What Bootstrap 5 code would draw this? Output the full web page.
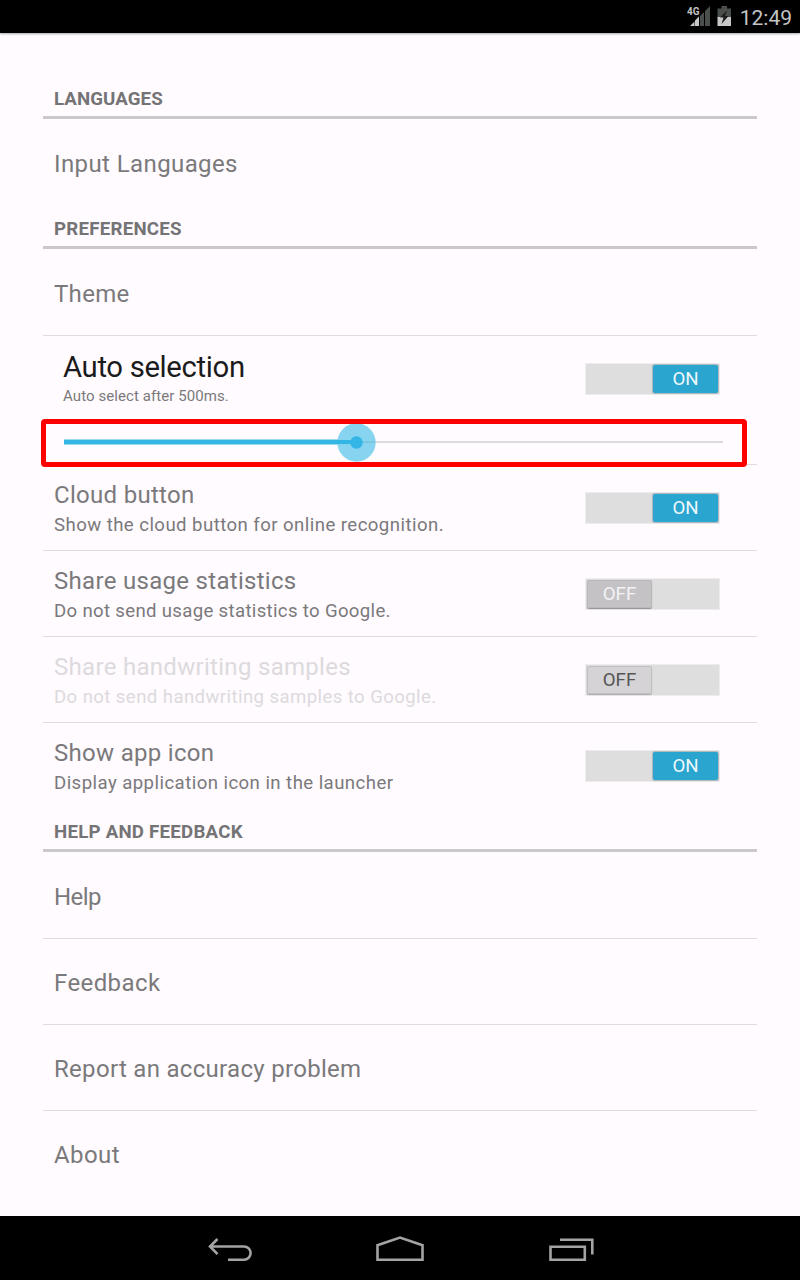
<!DOCTYPE html>
<html lang="en">
<head>
<meta charset="utf-8">
<meta name="viewport" content="width=device-width, initial-scale=1">
<title>Settings</title>
<link href="https://cdn.jsdelivr.net/npm/bootstrap@5.3.0/dist/css/bootstrap.min.css" rel="stylesheet">
<script src="https://cdn.jsdelivr.net/npm/bootstrap@5.3.0/dist/js/bootstrap.bundle.min.js" defer></script>
<style>
body{font-family:Roboto,"Noto Sans",sans-serif;background:#fffbff;color:#7a797b;width:800px;height:1280px;overflow:hidden}
.status{height:33px;color:#c4c4c4;font-size:21px;line-height:33px;padding-right:8px;box-shadow:0 1px 2px #aaa}
.clock{padding-top:3px;margin-left:7px}
.prefs{height:1183px;padding:42px 43px 0}
.head{height:44px;border-bottom:3px solid #cac8cb;padding:4px 11px 0;font-size:18.7px;font-weight:700;line-height:41px;letter-spacing:.23px;color:#747375}
.head.tight{letter-spacing:.08px}
.item{height:86px;border-bottom:1px solid #dedcdf;padding:4px 37px 0 11px}
.item.first{height:87px;padding-top:5px}
.item.final{height:85px;border:0}
.item.first.final{height:86px}
.ttl{font-size:24px;line-height:30px;letter-spacing:.3px}
.item>.ttl{margin-top:-2px}
.ttl.wide{letter-spacing:.4px}
.ttl.tight{letter-spacing:-.6px}
.sum{font-size:18.6px;line-height:30px;letter-spacing:.41px}
.sum.wide{letter-spacing:.44px}
.sum.tight{letter-spacing:.33px}
.faded{color:#dcdadd}
.auto{height:129px;border-bottom:1px solid #dedcdf;padding:14px 0 0 20px}
.auto-row{padding-right:37px}
.big{font-size:29.3px;line-height:34px;letter-spacing:-.35px;color:#1b1b1c}
.tiny{font-size:15px;line-height:24px;letter-spacing:.08px}
.toggle{width:135px;height:32px;background:#dededf;border:1px solid #eeecef;padding:1px;margin-top:-3px}
.auto .toggle{margin-top:0}
.knob{width:65px;height:28px;border-radius:2px;font-size:18.7px;line-height:29px;text-align:center}
.knob.on{background:#29a5d0;color:#eef8fb;box-shadow:0 0 1px 1px #a9b6ba}
.knob.off{background:#c4c2c5;color:#f3f2f4;box-shadow:inset 0 0 0 1px #bab8bb,0 1px 1px #929292}
.knob.dis{background:#d5d3d6;color:#555;box-shadow:inset 0 0 0 1px #c1bfc2,0 1px 1px #aaa}
.seek{width:706px;height:48px;margin:11px 0 0 -22px;border:5px solid #f00;border-radius:4px}
.seek svg,.navbtns svg{display:block}
.navbtns{height:64px}
</style>
</head>
<body>
<header class="status bg-black d-flex justify-content-end align-items-center">
<svg width="46" height="26" viewBox="687 4 46 26"><path d="M700 16l4-4v14h-4zM705 11l5-5v20h-5zM717.500 8.500h4V6h5.500v2.500h4V18h-13.500z" fill="#4b4f4c"/><path d="M690 26l4.500-4.500V26zM695 20.500l4-4V26h-4zM717.500 17h13.500v9h-13.500z" fill="#c8c8c8"/><path d="M727 10.500l-7 7h3.500l-2 6.500 7-8h-3.500z" fill="#1c1c1c"/><text x="687" y="15" font-size="11.500" font-weight="700" fill="#c4c4c4" textLength="12.500" lengthAdjust="spacingAndGlyphs">4G</text></svg>
<span class="clock">12:49</span>
</header>
<main class="prefs">
<div class="head tight">LANGUAGES</div>
<div class="item first final d-flex align-items-center"><span class="ttl wide">Input Languages</span></div>
<div class="head">PREFERENCES</div>
<div class="item first d-flex align-items-center"><span class="ttl">Theme</span></div>
<div class="auto">
<div class="auto-row d-flex justify-content-between align-items-center"><div><div class="big">Auto selection</div><div class="tiny">Auto select after 500ms.</div></div>
<div class="toggle d-flex justify-content-end"><div class="knob on">ON</div></div></div>
<div class="seek"><svg width="696" height="38" viewBox="46 424 696 38"><path d="M64 442h659" stroke="#dcdbde" stroke-width="2"/><path d="M64 442h292" stroke="#9adaf2" stroke-width="6"/><circle cx="356.500" cy="442.500" r="19.200" fill="#86d4f0"/><path d="M362 442h13" stroke="#7cc5df" stroke-width="2"/><path d="M64 442h292" stroke="#33b5e5" stroke-width="4"/><circle cx="356.500" cy="442.500" r="6.200" fill="#33b5e5"/></svg></div>
</div>
<div class="item d-flex align-items-center justify-content-between"><div><div class="ttl">Cloud button</div><div class="sum wide">Show the cloud button for online recognition.</div></div><div class="toggle d-flex justify-content-end"><div class="knob on">ON</div></div></div>
<div class="item d-flex align-items-center justify-content-between"><div><div class="ttl">Share usage statistics</div><div class="sum tight">Do not send usage statistics to Google.</div></div><div class="toggle d-flex"><div class="knob off">OFF</div></div></div>
<div class="item d-flex align-items-center justify-content-between"><div class="faded"><div class="ttl">Share handwriting samples</div><div class="sum">Do not send handwriting samples to Google.</div></div><div class="toggle d-flex"><div class="knob dis">OFF</div></div></div>
<div class="item final d-flex align-items-center justify-content-between"><div><div class="ttl">Show app icon</div><div class="sum wide">Display application icon in the launcher</div></div><div class="toggle d-flex justify-content-end"><div class="knob on">ON</div></div></div>
<div class="head">HELP AND FEEDBACK</div>
<div class="item first d-flex align-items-center"><span class="ttl tight">Help</span></div>
<div class="item d-flex align-items-center"><span class="ttl wide">Feedback</span></div>
<div class="item d-flex align-items-center"><span class="ttl">Report an accuracy problem</span></div>
<div class="item final d-flex align-items-center"><span class="ttl wide">About</span></div>
</main>
<footer class="navbtns bg-black d-flex justify-content-center">
<svg width="400" height="64" viewBox="200 1216 400 64" fill="none" stroke="#a3a3a3" stroke-width="2.600"><path d="M217.500 1239l-7.500 7.500 7.500 7.700M210 1246.500h34a6.500 6.500 0 0 1 0 13.200h-16M377.500 1259.700v-14.500l22.500-7.600 22.500 7.600v14.500zM550.500 1246.700h34.300v13h-34.300zM560 1239.800h32.300v14.800"/></svg>
</footer>
</body>
</html>
